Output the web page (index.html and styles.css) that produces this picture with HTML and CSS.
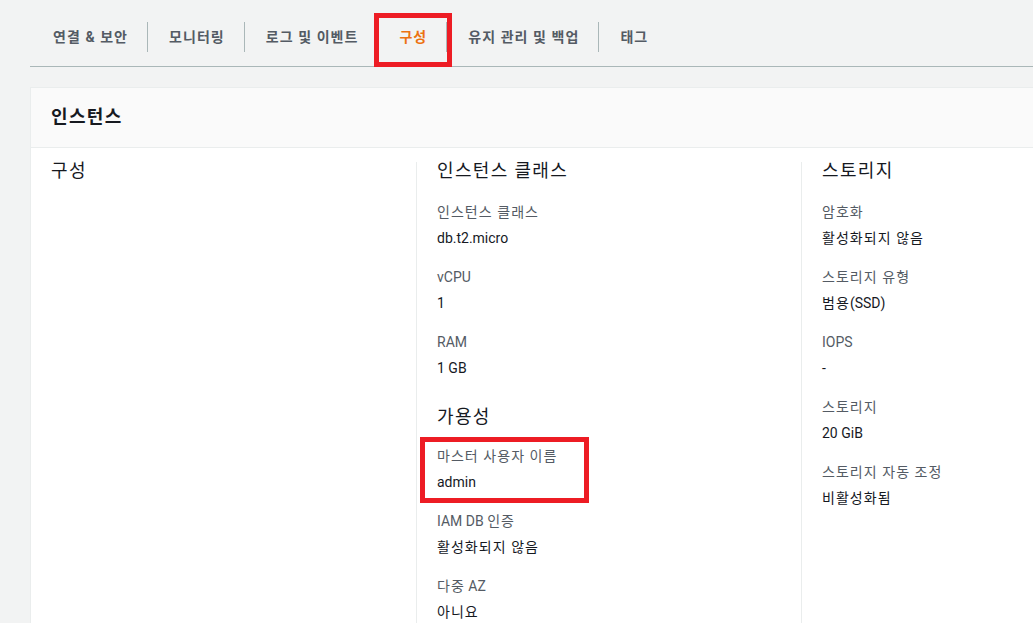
FILE: index.html
```html
<!DOCTYPE html>
<html lang="ko">

<head>
    <meta charset="UTF-8">
    <meta name="viewport" content="width=device-width, initial-scale=1.0">
    <title>인스턴스 구성</title>
    <link rel="stylesheet" href="styles.css">
</head>

<body>
    <div class="page">
        <!-- 탭 -->
        <div class="tabs">
            <a class="tab" href="javascript:;">연결 &amp; 보안</a>
            <a class="tab" href="javascript:;">모니터링</a>
            <a class="tab" href="javascript:;">로그 및 이벤트</a>
            <a class="tab active" href="javascript:;">구성<span class="mark mark-tab"></span></a>
            <a class="tab" href="javascript:;">유지 관리 및 백업</a>
            <a class="tab" href="javascript:;">태그</a>
        </div>

        <!-- 인스턴스 패널 -->
        <div class="panel">
            <div class="panel-header">
                <h2>인스턴스</h2>
            </div>
            <div class="panel-body">
                <div class="col">
                    <h3>구성</h3>
                </div>
                <div class="col">
                    <h3>인스턴스 클래스</h3>
                    <div class="field">
                        <div class="label ko">인스턴스 클래스</div>
                        <div class="value">db.t2.micro</div>
                    </div>
                    <div class="field">
                        <div class="label">vCPU</div>
                        <div class="value">1</div>
                    </div>
                    <div class="field">
                        <div class="label">RAM</div>
                        <div class="value">1 GB</div>
                    </div>
                    <h3 class="sub">가용성</h3>
                    <div class="field">
                        <div class="label ko">마스터 사용자 이름</div>
                        <div class="value">admin</div>
                        <span class="mark mark-field"></span>
                    </div>
                    <div class="field">
                        <div class="label">IAM DB <span class="ko">인증</span></div>
                        <div class="value ko">활성화되지 않음</div>
                    </div>
                    <div class="field">
                        <div class="label"><span class="ko">다중</span> AZ</div>
                        <div class="value ko">아니요</div>
                    </div>
                </div>
                <div class="col">
                    <h3>스토리지</h3>
                    <div class="field">
                        <div class="label ko">암호화</div>
                        <div class="value ko">활성화되지 않음</div>
                    </div>
                    <div class="field">
                        <div class="label ko">스토리지 유형</div>
                        <div class="value"><span class="ko">범용</span>(SSD)</div>
                    </div>
                    <div class="field">
                        <div class="label">IOPS</div>
                        <div class="value">-</div>
                    </div>
                    <div class="field">
                        <div class="label ko">스토리지</div>
                        <div class="value">20 GiB</div>
                    </div>
                    <div class="field">
                        <div class="label ko">스토리지 자동 조정</div>
                        <div class="value ko">비활성화됨</div>
                    </div>
                </div>
                <div class="col"></div>
            </div>
        </div>
    </div>
</body>

</html>
```

FILE: styles.css
```css
* {
    margin: 0;
    padding: 0;
    box-sizing: border-box;
}

html,
body {
    background-color: #f2f3f3;
    overflow: hidden;
}

body {
    font-family: Roboto, "Noto Sans CJK KR", sans-serif;
    font-size: 14px;
    color: #16191f;
}

a {
    text-decoration: none;
}

/* 한글 글자 폭 보정 */
.ko,
.tab,
h2,
h3 {
    letter-spacing: 0.075em;
}

.page {
    padding: 22px 0 0 30px;
}

/* 탭 */
.tabs {
    display: flex;
    padding: 0 0 14px 3px;
    border-bottom: 1px solid #aab7b8;
}

.tab {
    position: relative;
    padding: 0 19px 0 21px;
    line-height: 30px;
    font-size: 14px;
    font-weight: 700;
    color: #545b64;
    border-left: 1px solid #aab7b8;
    white-space: nowrap;
}

.tab:first-child {
    border-left: none;
    padding-left: 20px;
}

.tab.active {
    color: #ec7211;
}

/* 빨간 표시 박스 */
.mark {
    position: absolute;
    border: 5px solid #ed1c24;
}

.mark-tab {
    left: -4px;
    right: -6px;
    top: -9px;
    bottom: -15px;
}

.mark-field {
    left: -17px;
    width: 169px;
    top: -9px;
    bottom: -11px;
}

/* 패널 */
.panel {
    width: 1542px;
    margin-top: 20px;
    background: #ffffff;
    border: 1px solid #eaeded;
}

.panel-header {
    height: 60px;
    padding: 0 20px;
    background: #fafafa;
    border-bottom: 1px solid #eaeded;
}

.panel-header h2 {
    line-height: 57px;
    font-size: 18px;
    font-weight: 700;
}

.panel-body {
    display: grid;
    grid-template-columns: repeat(4, 385px);
    padding-top: 14px;
}

.col {
    padding: 0 20px;
    border-left: 1px solid #eaeded;
    min-height: 480px;
}

.col:first-child {
    border-left: none;
}

.col h3 {
    font-size: 18px;
    font-weight: 400;
    line-height: 18px;
    margin-bottom: 22px;
}

.col h3.sub {
    margin-top: 30px;
    margin-bottom: 20px;
}

.field {
    position: relative;
    margin-bottom: 19px;
}

.label {
    line-height: 20px;
    color: #545b64;
    margin-bottom: 6px;
}

.value {
    line-height: 20px;
    color: #16191f;
}
```
